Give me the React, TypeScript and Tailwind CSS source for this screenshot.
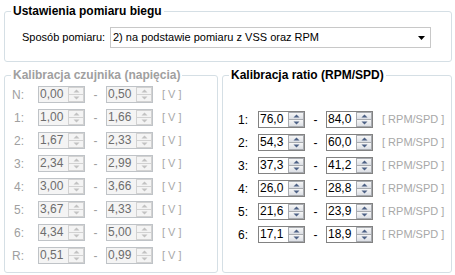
import React from "react";

function Arrow({ up, color }: { up: boolean; color: string }) {
  return (
    <svg width="7" height="4" viewBox="0 0 7 4" className="block">
      {up ? (
        <path d="M0.5 3.5 L3.5 0.5 L6.5 3.5 Z" fill={color} />
      ) : (
        <path d="M0.5 0.5 L3.5 3.5 L6.5 0.5 Z" fill={color} />
      )}
    </svg>
  );
}

function Spin({ v, disabled }: { v: string; disabled?: boolean }) {
  const box = disabled
    ? "border-[#bfc3c7] bg-[#f4f4f4] text-[#6d6d6d]"
    : "border-[#828282] bg-white text-black";
  const btn = disabled
    ? "border-[#d2d2d2] bg-[#f4f4f4]"
    : "border-[#a8abb0] bg-gradient-to-b from-[#f6f6f6] to-[#dcdfe5]";
  const arrow = disabled ? "#c2c2c2" : "#4d6185";
  return (
    <div className={`flex h-[17px] w-[47px] border ${box}`}>
      <div className="flex-1 pl-[1px] text-[12px] leading-[15px]">{v}</div>
      <div className="flex w-[16px] flex-col">
        <div className={`flex flex-1 items-center justify-center border ${btn}`}>
          <Arrow up color={arrow} />
        </div>
        <div className={`flex flex-1 items-center justify-center border border-t-0 ${btn}`}>
          <Arrow up={false} color={arrow} />
        </div>
      </div>
    </div>
  );
}

function Row({
  label,
  a,
  b,
  unit,
  disabled,
  labelW,
  gapL,
}: {
  label: string;
  a: string;
  b: string;
  unit: string;
  disabled?: boolean;
  labelW: string;
  gapL: string;
}) {
  return (
    <div className="flex h-[17px] items-center text-[12px]">
      <div className={`${labelW} text-right ${disabled ? "text-[#a0a0a0]" : "text-black"}`}>{label}</div>
      <div className={gapL}>
        <Spin v={a} disabled={disabled} />
      </div>
      <div className={`w-[21px] text-center ${disabled ? "text-[#a0a0a0]" : "text-black"}`}>-</div>
      <Spin v={b} disabled={disabled} />
      <div className="ml-[9px] whitespace-nowrap text-[11px] text-[#a8a8a8]">{unit}</div>
    </div>
  );
}

export default function App() {
  const left: [string, string, string][] = [
    ["N:", "0,00", "0,50"],
    ["1:", "1,00", "1,66"],
    ["2:", "1,67", "2,33"],
    ["3:", "2,34", "2,99"],
    ["4:", "3,00", "3,66"],
    ["5:", "3,67", "4,33"],
    ["6:", "4,34", "5,00"],
    ["R:", "0,51", "0,99"],
  ];
  const right: [string, string, string][] = [
    ["1:", "76,0", "84,0"],
    ["2:", "54,3", "60,0"],
    ["3:", "37,3", "41,2"],
    ["4:", "26,0", "28,8"],
    ["5:", "21,6", "23,9"],
    ["6:", "17,1", "18,9"],
  ];
  return (
    <div className="h-[275px] w-[455px] overflow-hidden bg-white pt-[4px] font-['Liberation_Sans',Arial,sans-serif] text-[12px] text-black">
      <fieldset className="ml-[4px] h-[58px] w-[448px] rounded-[3px] border border-[#d5dfe5] px-0">
        <legend className="ml-[6px] px-[2px] text-[12px] font-bold leading-[14px]">Ustawienia pomiaru biegu</legend>
        <div className="mt-[9px] flex items-center pl-[17px] text-[11px]">
          <div className="w-[88px] whitespace-nowrap">Sposób pomiaru:</div>
          <div className="flex h-[21px] w-[321px] items-center border border-[#c8c8c8] bg-white pl-[2px]">
            <div className="flex-1 whitespace-nowrap">2) na podstawie pomiaru z VSS oraz RPM</div>
            <div className="mr-[5px]">
              <svg width="7" height="4" viewBox="0 0 7 4" className="block">
                <path d="M0 0 L7 0 L3.5 4 Z" fill="#000" />
              </svg>
            </div>
          </div>
        </div>
      </fieldset>
      <div className="ml-[4px] mt-[6px] flex gap-[4px]">
        <fieldset className="h-[205px] w-[214px] rounded-[3px] border border-[#d5dfe5] px-0">
          <legend className="ml-[6px] px-[2px] text-[12px] font-bold leading-[14px] text-[#a0a0a0]">
            Kalibracja czujnika (napięcia)
          </legend>
          <div className="mt-[4px] flex flex-col gap-[6px]">
            {left.map(([l, a, b]) => (
              <Row key={l} label={l} a={a} b={b} unit="[ V ]" disabled labelW="w-[19px]" gapL="ml-[14px]" />
            ))}
          </div>
        </fieldset>
        <fieldset className="h-[205px] w-[230px] rounded-[3px] border border-[#d5dfe5] px-0">
          <legend className="ml-[6px] px-[2px] text-[12px] font-bold leading-[14px]">Kalibracja ratio (RPM/SPD)</legend>
          <div className="mt-[29px] flex flex-col gap-[6px]">
            {right.map(([l, a, b]) => (
              <Row key={l} label={l} a={a} b={b} unit="[ RPM/SPD ]" labelW="w-[25px]" gapL="ml-[10px]" />
            ))}
          </div>
        </fieldset>
      </div>
    </div>
  );
}
